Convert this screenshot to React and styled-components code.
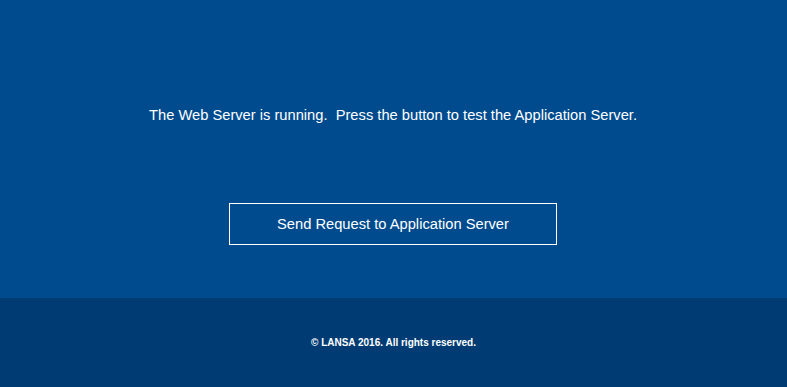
import React from "react";
import styled, { createGlobalStyle } from "styled-components";

const Global = createGlobalStyle`
  html, body { margin: 0; padding: 0; height: 100%; }
  body { font-family: "Liberation Sans", Arial, sans-serif; background: #003c73; }
  #root { height: 100%; }
`;

const Page = styled.div`
  display: flex;
  flex-direction: column;
  height: 387px;
`;

const Main = styled.main`
  background: #004b8e;
  height: 298px;
  display: flex;
  flex-direction: column;
  align-items: center;
  padding: 106px 1px 0 0;
  box-sizing: border-box;
`;

const Message = styled.p`
  margin: 0;
  color: #ffffff;
  font-size: 14.7px;
  line-height: 18px;
  white-space: pre;
`;

const Button = styled.button`
  margin-top: 79px;
  width: 328px;
  height: 42px;
  background: transparent;
  border: 1px solid #ffffff;
  color: #ffffff;
  font-family: inherit;
  font-size: 14.7px;
  cursor: pointer;
`;

const Footer = styled.footer`
  flex: 1;
  background: #003c73;
  display: flex;
  justify-content: center;
  padding-top: 38px;
  box-sizing: border-box;
`;

const Copy = styled.p`
  margin: 0;
  color: #ffffff;
  font-size: 10px;
  font-weight: bold;
  line-height: 13px;
`;

export default function App() {
  return (
    <>
      <Global />
      <Page>
        <Main>
          <Message>{"The Web Server is running.  Press the button to test the Application Server."}</Message>
          <Button>Send Request to Application Server</Button>
        </Main>
        <Footer>
          <Copy>© LANSA 2016. All rights reserved.</Copy>
        </Footer>
      </Page>
    </>
  );
}
